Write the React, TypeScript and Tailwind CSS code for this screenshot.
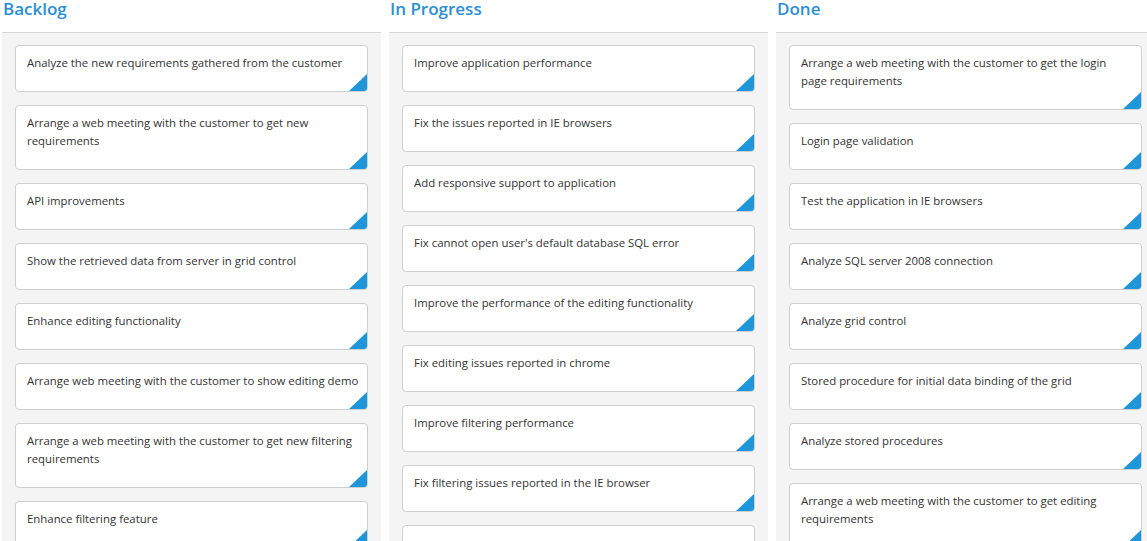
// line breaks follow the reference wrapping
const COLUMNS = [
  {
    title: "Backlog",
    cards: [
      "Analyze the new requirements gathered from the customer",
      "Arrange a web meeting with the customer to get new\nrequirements",
      "API improvements",
      "Show the retrieved data from server in grid control",
      "Enhance editing functionality",
      "Arrange web meeting with the customer to show editing demo",
      "Arrange a web meeting with the customer to get new filtering\nrequirements",
      "Enhance filtering feature",
    ],
  },
  {
    title: "In Progress",
    cards: [
      "Improve application performance",
      "Fix the issues reported in IE browsers",
      "Add responsive support to application",
      "Fix cannot open user's default database SQL error",
      "Improve the performance of the editing functionality",
      "Fix editing issues reported in chrome",
      "Improve filtering performance",
      "Fix filtering issues reported in the IE browser",
      "",
    ],
  },
  {
    title: "Done",
    cards: [
      "Arrange a web meeting with the customer to get the login\npage requirements",
      "Login page validation",
      "Test the application in IE browsers",
      "Analyze SQL server 2008 connection",
      "Analyze grid control",
      "Stored procedure for initial data binding of the grid",
      "Analyze stored procedures",
      "Arrange a web meeting with the customer to get editing\nrequirements",
    ],
  },
];

function Card({ text }: { text: string }) {
  return (
    <div className="relative overflow-hidden rounded-[4px] border border-[#cfcfcf] bg-white pl-[11px] pt-[8px] pb-[19px]">
      <p className="min-h-[18px] whitespace-pre-line text-[11.4px] leading-[18px] text-[#333]">{text}</p>
      {/* corner marker */}
      <div className="absolute bottom-0 right-0 h-0 w-0 border-b-[17px] border-l-[18px] border-b-[#1e96d9] border-l-transparent" />
    </div>
  );
}

export default function App() {
  return (
    <div
      className="h-[541px] w-[1147px] overflow-hidden bg-white"
      style={{ fontFamily: '"Segoe UI", "Open Sans", "Noto Sans", sans-serif' }}
    >
      <div className="grid w-[1155px] grid-cols-[379px_379px_379px] gap-2 pl-[2px]">
        {COLUMNS.map((col) => (
          <div key={col.title} className="flex flex-col">
            <h2 className="h-[32px] pl-[1px] text-[17px] font-semibold leading-[18px] text-[#2a8fd4]">
              {col.title}
            </h2>
            <div className="flex h-[600px] flex-col gap-[13px] border-t border-[#d6d6d6] bg-[#f4f4f4] px-[13px] pt-[12px]">
              {col.cards.map((c, i) => (
                <Card key={i} text={c} />
              ))}
            </div>
          </div>
        ))}
      </div>
    </div>
  );
}
